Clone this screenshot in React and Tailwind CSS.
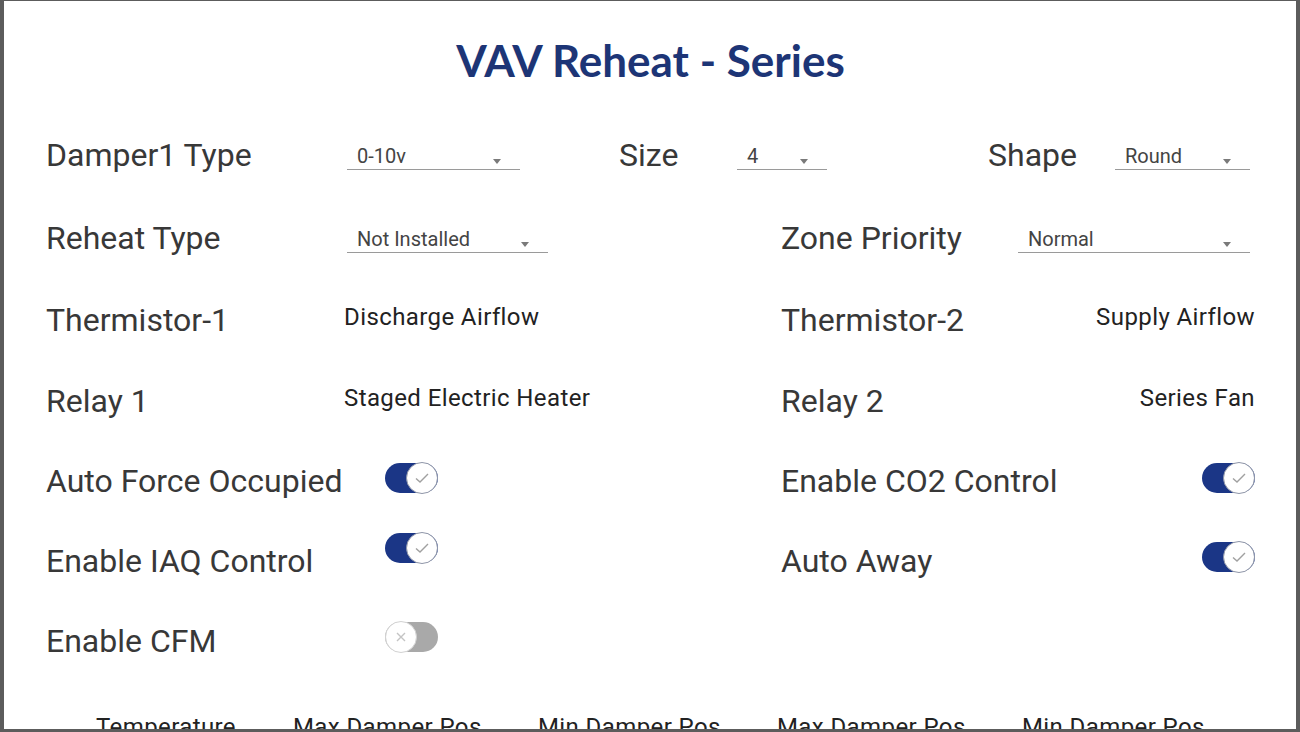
import React from 'react';

const Arrow = () => (
  <svg width="8" height="5" viewBox="0 0 8 5" className="mr-[19px] mb-[4px]">
    <path d="M0 0 L8 0 L4 5 Z" fill="#7a7a7a" />
  </svg>
);

function Select({ value, width }) {
  return (
    <div className={`${width} h-[30px] flex items-end justify-between border-b border-[#9a9a9a] pl-[10px] pb-[1px]`}>
      <span className="text-[20px] leading-[24px] text-[#444]">{value}</span>
      <Arrow />
    </div>
  );
}

function Toggle({ on }) {
  if (on) {
    return (
      <div className="relative w-[53px] h-[30px] rounded-full bg-[#1b3686]">
        <div className="absolute right-0 top-[-1px] w-[32px] h-[32px] rounded-full bg-white border border-[#8f96a8] flex items-center justify-center">
          <svg width="16" height="12" viewBox="0 0 16 12">
            <path d="M2 6.5 L6 10 L14 2" fill="none" stroke="#a0a0a0" strokeWidth="1.4" />
          </svg>
        </div>
      </div>
    );
  }
  return (
    <div className="relative w-[53px] h-[30px] rounded-full bg-[#a9a9a9]">
      <div className="absolute left-0 top-[-1px] w-[32px] h-[32px] rounded-full bg-white border border-[#d2d2d2] flex items-center justify-center">
        <svg width="12" height="12" viewBox="0 0 12 12">
          <path d="M2 2 L10 10 M10 2 L2 10" fill="none" stroke="#c4c4c4" strokeWidth="1.4" />
        </svg>
      </div>
    </div>
  );
}

const Label = ({ children, className = '' }) => (
  <div className={`text-[32px] leading-[36px] text-[#383838] ${className}`}>{children}</div>
);

const Value = ({ children, className = '' }) => (
  <div className={`text-[24px] leading-[28px] tracking-[0.4px] text-[#222] mb-[6px] ${className}`}>{children}</div>
);

const headers = [
  { text: 'Temperature', w: 'w-[197px]' },
  { text: 'Max Damper Pos', w: 'w-[245px]' },
  { text: 'Min Damper Pos', w: 'w-[239px]' },
  { text: 'Max Damper Pos', w: 'w-[245px]' },
  { text: 'Min Damper Pos', w: 'w-[200px]' },
];

export default function App() {
  return (
    <div className="w-[1300px] h-[732px] overflow-hidden bg-white border-l-4 border-r-4 border-t border-b-[3px] border-[#5c5c5c] font-['Roboto',sans-serif]">
      <div className="pl-[42px] pr-[41px]">
        <div className="pt-[35px] pb-[29px] text-center">
          <h1 className="font-['Lato',sans-serif] font-bold text-[44px] leading-[48px] text-[#1d3576]">
            VAV Reheat - Series
          </h1>
        </div>

        <div className="h-[84px] flex items-center">
          <Label className="w-[301px]">Damper1 Type</Label>
          <Select value="0-10v" width="w-[173px]" />
          <Label className="ml-[99px] w-[118px]">Size</Label>
          <Select value="4" width="w-[90px]" />
          <Label className="ml-[161px] w-[127px]">Shape</Label>
          <Select value="Round" width="w-[135px]" />
        </div>

        <div className="h-[82px] grid grid-cols-[735px_1fr] items-center">
          <div className="flex items-center">
            <Label className="w-[301px]">Reheat Type</Label>
            <Select value="Not Installed" width="w-[201px]" />
          </div>
          <div className="flex items-center">
            <Label className="w-[237px]">Zone Priority</Label>
            <Select value="Normal" width="w-[232px]" />
          </div>
        </div>

        <div className="h-[82px] grid grid-cols-[735px_1fr] items-center">
          <div className="flex items-center">
            <Label className="w-[298px]">Thermistor-1</Label>
            <Value>Discharge Airflow</Value>
          </div>
          <div className="flex items-center justify-between">
            <Label>Thermistor-2</Label>
            <Value>Supply Airflow</Value>
          </div>
        </div>

        <div className="h-[80px] grid grid-cols-[735px_1fr] items-center">
          <div className="flex items-center">
            <Label className="w-[298px]">Relay 1</Label>
            <Value>Staged Electric Heater</Value>
          </div>
          <div className="flex items-center justify-between">
            <Label>Relay 2</Label>
            <Value>Series Fan</Value>
          </div>
        </div>

        <div className="h-[80px] grid grid-cols-[735px_1fr] items-center">
          <div className="flex items-center">
            <Label className="w-[339px]">Auto Force Occupied</Label>
            <div className="mb-[6px]"><Toggle on /></div>
          </div>
          <div className="flex items-center justify-between">
            <Label>Enable CO2 Control</Label>
            <div className="mb-[6px]"><Toggle on /></div>
          </div>
        </div>

        <div className="h-[80px] grid grid-cols-[735px_1fr] items-center">
          <div className="flex items-center">
            <Label className="w-[339px]">Enable IAQ Control</Label>
            <div className="mb-[26px]"><Toggle on /></div>
          </div>
          <div className="flex items-center justify-between">
            <Label>Auto Away</Label>
            <div className="mb-[8px]"><Toggle on /></div>
          </div>
        </div>

        <div className="h-[80px] grid grid-cols-[735px_1fr] items-center">
          <div className="flex items-center">
            <Label className="w-[339px]">Enable CFM</Label>
            <div className="mb-[8px]"><Toggle on={false} /></div>
          </div>
          <div />
        </div>

        <div className="mt-[32px] pl-[50px] flex">
          {headers.map((h, i) => (
            <div key={i} className={`${h.w} text-[24px] leading-[28px] tracking-[0.4px] text-[#222]`}>
              {h.text}
            </div>
          ))}
        </div>
      </div>
    </div>
  );
}
